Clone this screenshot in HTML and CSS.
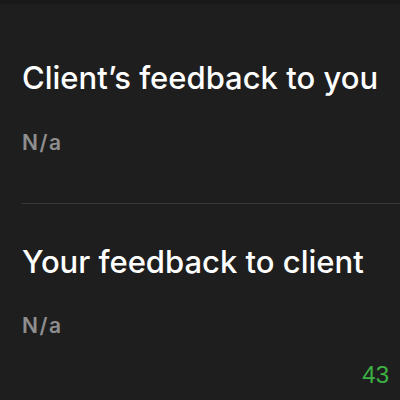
FILE: index.html
```html
<!DOCTYPE html>
<html>
<head>
<meta charset="utf-8">
<link rel="stylesheet" href="styles.css">
</head>
<body>
<div class="topbar"></div>
<main class="content">
  <section class="block">
    <h2 class="title">Client’s feedback to you</h2>
    <p class="value">N/a</p>
  </section>
  <hr class="divider">
  <section class="block second">
    <h2 class="title">Your feedback to client</h2>
    <p class="value">N/a</p>
  </section>
  <div class="counter">43</div>
</main>
</body>
</html>
```
FILE: styles.css
```css
html, body {
  margin: 0;
  padding: 0;
  background: #1e1e1e;
  width: 400px;
  height: 400px;
  overflow: hidden;
}
.topbar {
  height: 4px;
  background: #191919;
}
.content {
  display: flex;
  flex-direction: column;
  padding-left: 22px;
}
.block {
  display: flex;
  flex-direction: column;
}
.title {
  margin: 55px 0 0 0;
  font-family: Inter, "Liberation Sans", sans-serif;
  font-weight: 550;
  font-size: 31px;
  line-height: 38px;
  color: #ffffff;
}
.value {
  margin: 33px 0 0 0;
  font-family: Inter, "Liberation Sans", sans-serif;
  font-weight: 600;
  font-size: 21px;
  line-height: 26px;
  letter-spacing: 1.6px;
  color: #8e8e8e;
}
.divider {
  margin: 47px 0 0 0;
  border: 0;
  height: 1px;
  background: #3a3a3a;
}
.second .title {
  margin-top: 39px;
}
.second .value {
  margin-top: 32px;
}
.counter {
  margin-top: 23px;
  align-self: flex-end;
  padding-right: 11px;
  font-family: "Liberation Sans", sans-serif;
  font-size: 24px;
  line-height: 26px;
  color: #3cb043;
}
```
